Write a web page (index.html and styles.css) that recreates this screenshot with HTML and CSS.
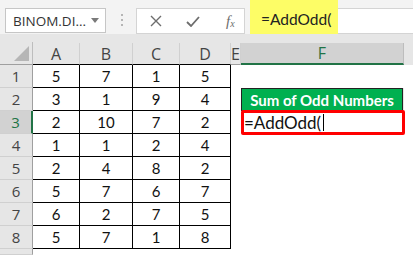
FILE: index.html
```html
<!DOCTYPE html>
<html lang="en">
<head>
    <meta charset="UTF-8">
    <title>AddOdd</title>
    <link rel="stylesheet" href="styles.css">
</head>
<body>
    <div class="toolbar">
        <div class="namebox">
            <span class="name">BINOM.DI...</span>
            <svg class="caret" width="8" height="5" viewBox="0 0 8 5"><path d="M0 0H8L4 5Z" fill="#7a7a7a"/></svg>
        </div>
        <div class="grip"><i></i><i></i><i></i></div>
        <div class="fbtns">
            <svg width="12" height="12" viewBox="0 0 12 12"><path d="M1 1L11 11M11 1L1 11" stroke="#6d6d6d" stroke-width="1.4" fill="none"/></svg>
            <svg width="14" height="11" viewBox="0 0 14 11"><path d="M1 6L5 10L13 1" stroke="#6d6d6d" stroke-width="1.8" fill="none"/></svg>
            <span class="fx">f<sub>x</sub></span>
        </div>
        <div class="fbar"><span class="hl">=AddOdd(</span></div>
    </div>
    <div class="sheet">
        <div class="corner"><span class="tri"></span></div>
        <div class="ch data">A</div><div class="ch data">B</div><div class="ch data">C</div><div class="ch data">D</div>
        <div class="ch narrow">E</div><div class="ch sel">F</div><div class="ch blank"></div>

        <div class="rh">1</div>
        <div class="c">5</div><div class="c">7</div><div class="c">1</div><div class="c">5</div>
        <div class="e"></div><div class="e"></div><div class="e"></div>

        <div class="rh">2</div>
        <div class="c">3</div><div class="c">1</div><div class="c">9</div><div class="c">4</div>
        <div class="e"></div><div class="title">Sum of Odd Numbers</div><div class="e"></div>

        <div class="rh sel">3</div>
        <div class="c">2</div><div class="c">10</div><div class="c">7</div><div class="c">2</div>
        <div class="e"></div><div class="edit">=AddOdd(<span class="cursor"></span></div><div class="e"></div>

        <div class="rh">4</div>
        <div class="c">1</div><div class="c">1</div><div class="c">2</div><div class="c">4</div>
        <div class="e"></div><div class="e"></div><div class="e"></div>

        <div class="rh">5</div>
        <div class="c">2</div><div class="c">4</div><div class="c">8</div><div class="c">2</div>
        <div class="e"></div><div class="e"></div><div class="e"></div>

        <div class="rh">6</div>
        <div class="c">5</div><div class="c">7</div><div class="c">6</div><div class="c">7</div>
        <div class="e"></div><div class="e"></div><div class="e"></div>

        <div class="rh">7</div>
        <div class="c">6</div><div class="c">2</div><div class="c">7</div><div class="c">5</div>
        <div class="e"></div><div class="e"></div><div class="e"></div>

        <div class="rh">8</div>
        <div class="c">5</div><div class="c">7</div><div class="c">1</div><div class="c">8</div>
        <div class="e"></div><div class="e"></div><div class="e"></div>

        <div class="rh"></div>
        <div class="e"></div><div class="e"></div><div class="e"></div><div class="e"></div>
        <div class="e"></div><div class="e"></div><div class="e"></div>
    </div>
</body>
</html>
```

FILE: styles.css
```css
body { margin: 0; width: 413px; height: 255px; overflow: hidden; background: #fff; font-family: Lato, "Liberation Sans", sans-serif; }
.toolbar { display: flex; align-items: flex-start; height: 35px; background: #f3f3f3; border-bottom: 1px solid #dadada; box-sizing: border-box; }
.namebox { display: flex; align-items: center; justify-content: space-between; margin: 8px 0 0 5px; width: 101px; height: 25px; box-sizing: border-box; border: 1px solid #c6c6c6; background: #fff; padding: 0 6px 0 7px; font-family: "Open Sans", sans-serif; font-size: 13.5px; color: #333; }
.grip { display: flex; flex-direction: column; gap: 3px; margin: 14px 0 0 15px; width: 2px; }
.grip i { display: block; width: 2px; height: 2px; background: #b5b5b5; }
.fbtns { display: flex; align-items: center; margin: 8px 0 0 13px; width: 109px; height: 26px; box-sizing: border-box; border: 1px solid #d4d4d4; background: #fff; padding-left: 13px; gap: 24px; }
.fx { font-family: "Liberation Serif", serif; font-style: italic; font-size: 15px; color: #6d6d6d; margin-left: 2px; }
.fx sub { font-size: 10px; vertical-align: -1px; }
.fbar { flex: 1; display: flex; margin: 8px 0 0 5px; height: 26px; box-sizing: border-box; border: 1px solid #d4d4d4; border-right: none; background: #fff; }
.hl { margin: -9px 0 -1px -1px; width: 88px; background: #fdfd66; padding: 10px 0 0 11px; box-sizing: border-box; font-size: 15.5px; color: #222; }
.sheet { display: grid; grid-template-columns: 33px 47px 53px 47px 51px 10px 163px 9px; grid-template-rows: 31px repeat(8, 23px) 6px; background: #e6e6e6; margin-top: -1px; }
.corner { position: relative; border-right: 1px solid #bdbdbd; border-bottom: 1px solid #9f9f9f; margin-top: 8px; }
.tri { position: absolute; right: 3px; bottom: 3px; width: 15px; height: 15px; background: #b6b6b6; clip-path: polygon(100% 0, 100% 100%, 0 100%); }
.ch { display: flex; align-items: center; justify-content: center; margin-top: 9px; border-right: 1px solid #d0d0d0; border-bottom: 1px solid #9f9f9f; font-family: "Open Sans", sans-serif; font-size: 16px; color: #444; }
.ch.data { border-bottom-color: #000; }
.ch.narrow { justify-content: flex-start; }
.ch.sel { background: #d2d2d2; color: #217346; border-bottom: 2px solid #217346; border-right: 1px solid #bdbdbd; }
.ch.blank { border: none; }
.rh { display: flex; align-items: center; justify-content: center; background: #e6e6e6; border-right: 1px solid #9f9f9f; border-bottom: 1px solid #d0d0d0; font-family: "Open Sans", sans-serif; font-size: 15px; color: #444; }
.rh.sel { background: #d2d2d2; color: #217346; border-right: 2px solid #217346; }
.c { display: flex; align-items: center; justify-content: center; background: #fff; border-right: 1px solid #000; border-bottom: 1px solid #000; font-size: 15px; color: #111; }
.e { background: #fff; }
.title { display: flex; align-items: center; justify-content: center; background: #00b050; border: 1px solid #222; color: #fff; font-weight: bold; font-size: 15px; margin-right: 1px; }
.edit { display: flex; align-items: center; background: #fff; border: 3px solid #ff0000; border-radius: 2px; margin: -1px -1px -1px 0; font-size: 17px; color: #111; z-index: 1; }
.cursor { display: inline-block; width: 1px; height: 17px; background: #000; margin-left: 2px; }
```
